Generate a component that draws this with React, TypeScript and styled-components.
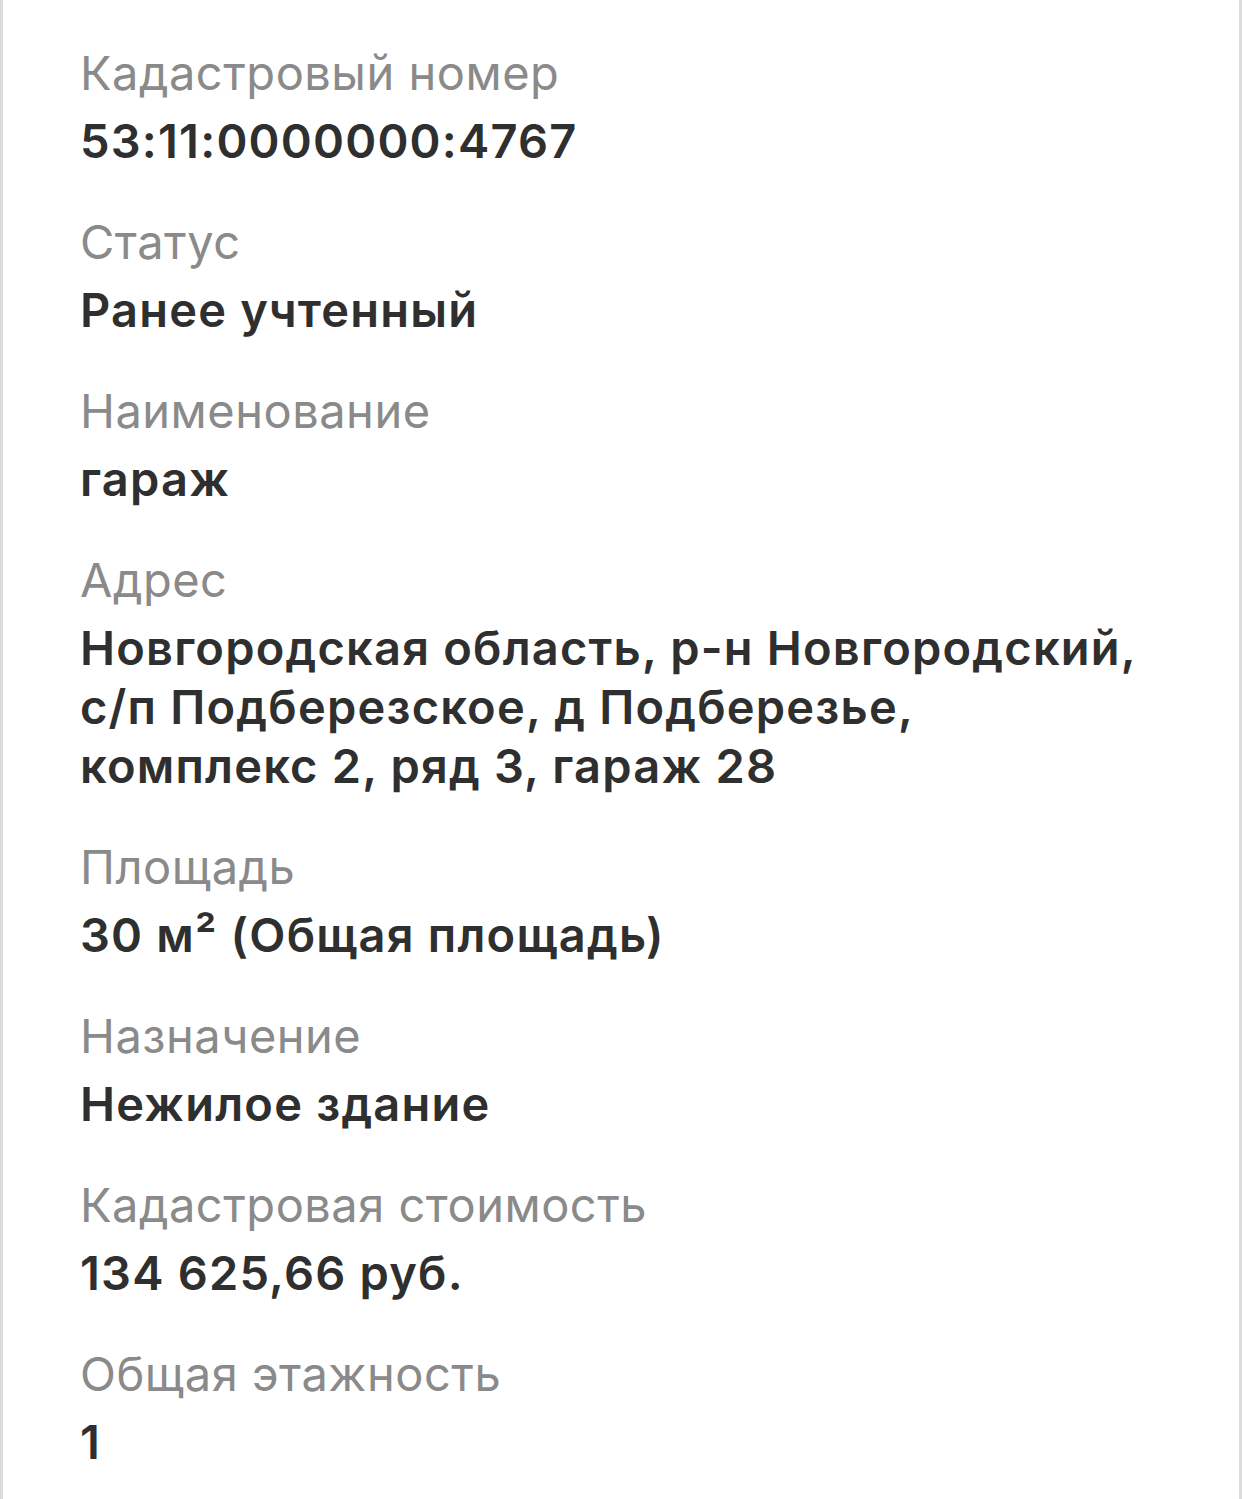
import styled, { createGlobalStyle } from "styled-components";

const GlobalStyle = createGlobalStyle`
  html, body {
    margin: 0;
    padding: 0;
    background: #fff;
  }
  body {
    font-family: Inter, "Noto Sans", "Liberation Sans", sans-serif;
    -webkit-font-smoothing: antialiased;
  }
`;

const Panel = styled.div`
  width: 1242px;
  height: 1499px;
  box-sizing: border-box;
  border-left: 3px solid #dcdcdc;
  border-right: 3px solid #dcdcdc;
  background: #fff;
  padding: 43px 40px 0 77px;
  display: flex;
  flex-direction: column;
  gap: 42px;
  overflow: hidden;
`;

const Field = styled.div`
  display: flex;
  flex-direction: column;
  gap: 9px;
`;

const Label = styled.div`
  font-size: 47px;
  line-height: 59px;
  font-weight: 400;
  letter-spacing: 0.5px;
  color: #8a8a8a;
`;

const Value = styled.div`
  font-size: 47px;
  line-height: 59px;
  font-weight: 600;
  letter-spacing: 1.2px;
  color: #2f2f2f;
`;

const fields: { label: string; value: string[] }[] = [
  { label: "Кадастровый номер", value: ["53:11:0000000:4767"] },
  { label: "Статус", value: ["Ранее учтенный"] },
  { label: "Наименование", value: ["гараж"] },
  {
    label: "Адрес",
    value: [
      "Новгородская область, р-н Новгородский,",
      "с/п Подберезское, д Подберезье,",
      "комплекс 2, ряд 3, гараж 28",
    ],
  },
  { label: "Площадь", value: ["30 м² (Общая площадь)"] },
  { label: "Назначение", value: ["Нежилое здание"] },
  { label: "Кадастровая стоимость", value: ["134 625,66 руб."] },
  { label: "Общая этажность", value: ["1"] },
];

const App: React.FC = () => {
  return (
    <>
      <GlobalStyle />
      <Panel>
        {fields.map((f) => (
          <Field key={f.label}>
            <Label>{f.label}</Label>
            <Value>
              {f.value.map((line) => (
                <div key={line}>{line}</div>
              ))}
            </Value>
          </Field>
        ))}
      </Panel>
    </>
  );
};

export default App;
